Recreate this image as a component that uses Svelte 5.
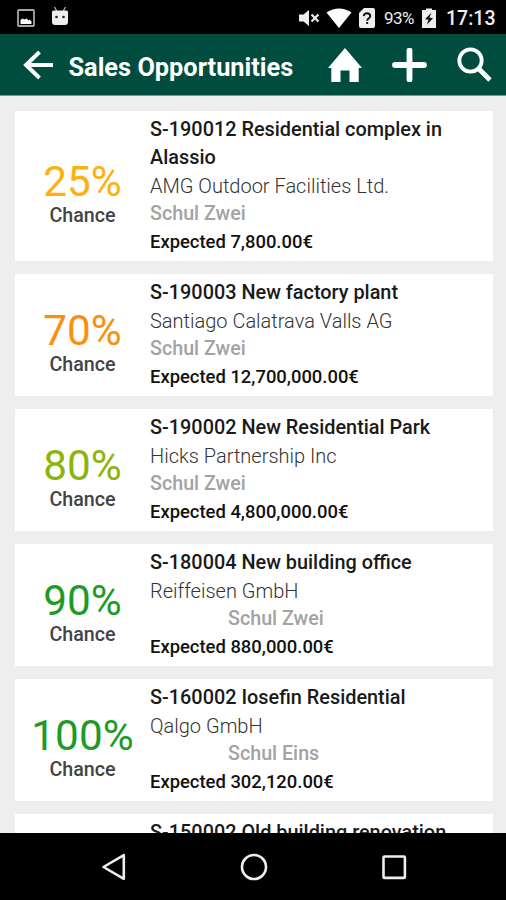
<script>
  const opportunities = [
    { chance: '25%', color: '#fdb10f', title: 'S-190012 Residential complex in Alassio', company: 'AMG Outdoor Facilities Ltd.', owner: 'Schul Zwei', expected: '7,800.00€' },
    { chance: '70%', color: '#fb900c', title: 'S-190003 New factory plant', company: 'Santiago Calatrava Valls AG', owner: 'Schul Zwei', expected: '12,700,000.00€' },
    { chance: '80%', color: '#8cb40c', title: 'S-190002 New Residential Park', company: 'Hicks Partnership Inc', owner: 'Schul Zwei', expected: '4,800,000.00€' },
    { chance: '90%', color: '#1e9a25', title: 'S-180004 New building office', company: 'Reiffeisen GmbH', owner: 'Schul Zwei', indented: true, expected: '880,000.00€' },
    { chance: '100%', color: '#1e9a25', title: 'S-160002 Iosefin Residential', company: 'Qalgo GmbH', owner: 'Schul Eins', indented: true, expected: '302,120.00€' },
    { title: 'S-150002 Old building renovation' }
  ];
</script>

<div class="screen">
  <div class="status">
    <svg class="picture" width="18" height="18" viewBox="0 0 18 18">
      <rect x="1" y="1" width="16" height="16" rx="1" fill="none" stroke="#a6a6a6" stroke-width="1.8" />
      <path d="M3.500 15V11l2-1.500 2 1 2-1 2 2 1-1 2 2v2.500z" fill="#fff" />
    </svg>
    <svg class="robot" width="18" height="20" viewBox="0 0 18 20">
      <path d="M3.500 1l2.300 4M14.500 1l-2.300 4" stroke="#bbb" stroke-width="1.200" />
      <path d="M1 6q0-1.500 1.500-1.500h13Q17 4.500 17 6v10q0 3-3 3H4q-3 0-3-3z" fill="#eee" />
      <circle cx="5.500" cy="11" r="1.300" fill="#222" /><circle cx="12.500" cy="11" r="1.300" fill="#222" />
    </svg>
    <span class="spacer"></span>
    <svg class="mute" width="21" height="18" viewBox="0 0 21 18">
      <path d="M0 5.500h4.500L10 1v16l-5.500-4.500H0z" fill="#eee" />
      <path d="M12.500 5.500l7 7M19.500 5.500l-7 7" stroke="#eee" stroke-width="2.200" />
    </svg>
    <svg class="wifi" width="26" height="20" viewBox="0 0 26 20">
      <path d="M0.500 4.500Q13-3.500 25.500 4.500L13 20z" fill="#fff" />
    </svg>
    <svg class="sim" width="16" height="20" viewBox="0 0 16 20">
      <path d="M5 0h9q2 0 2 2v16q0 2-2 2H2q-2 0-2-2V5z" fill="#eee" />
      <path d="M4.700 8.200Q5 5.200 8 5.200t3.300 2.800c0 2.300-3.100 2.300-3.100 4.800M8.200 14v2" fill="none" stroke="#111" stroke-width="1.900" />
    </svg>
    <span class="percent">93%</span>
    <svg class="battery" width="14" height="20" viewBox="0 0 14 20">
      <path d="M4 0.500h6V2h4v18H0V2h4z" fill="#eee" />
      <path d="M9.500 4.500L3 11.200l3.500.6-1.700 5L11 10.200l-3.600-.6z" fill="#111" />
    </svg>
    <span class="clock">17:13</span>
  </div>

  <header>
    <svg class="back" width="32" height="32" viewBox="0 0 32 32">
      <path d="M17.500 3L4 16l13.500 13M4.500 16H31" fill="none" stroke="#fff" stroke-width="3.900" />
    </svg>
    <h1>Sales Opportunities</h1>
    <span class="spacer"></span>
    <svg class="home" width="34" height="34" viewBox="0 0 34 34">
      <path d="M17 0l17 20h-3.300v14H21.500V22.500h-9V34H3.300V20H0z" fill="#fff" />
    </svg>
    <svg class="add" width="35" height="34" viewBox="0 0 35 34">
      <path d="M17.500 2.500v29M3 17h29" stroke="#fff" stroke-width="5.800" stroke-linecap="round" />
    </svg>
    <svg class="search" width="35" height="35" viewBox="0 0 35 35">
      <circle cx="13.500" cy="13.500" r="11.200" fill="none" stroke="#fff" stroke-width="3.800" />
      <path d="M21.500 21.500L33 33" stroke="#fff" stroke-width="4.800" />
    </svg>
  </header>

  <main>
    {#each opportunities as item}
      <article>
        <div class="chance">
          {#if item.chance}
            <strong style="color: {item.color}">{item.chance}</strong>
            <span>Chance</span>
          {/if}
        </div>
        <div class="details">
          <h2>{item.title}</h2>
          {#if item.company}
            <p class="company">{item.company}</p>
            <p class="owner" class:indented={item.indented}>{item.owner}</p>
            <p class="expected">Expected {item.expected}</p>
          {/if}
        </div>
      </article>
    {/each}
  </main>

  <nav>
    <svg width="26" height="28" viewBox="0 0 26 28">
      <path d="M22.800 2.200v23.600L2.500 14z" fill="none" stroke="#eee" stroke-width="2.600" stroke-linejoin="round" />
    </svg>
    <svg width="28" height="28" viewBox="0 0 28 28">
      <circle cx="14" cy="14" r="12" fill="none" stroke="#eee" stroke-width="2.600" />
    </svg>
    <svg width="26" height="26" viewBox="0 0 26 26">
      <rect x="2.500" y="2.500" width="21.400" height="21.400" rx="1" fill="none" stroke="#eee" stroke-width="2.600" />
    </svg>
  </nav>
</div>

<style>
  .screen {
    width: 506px;
    height: 900px;
    display: flex;
    flex-direction: column;
    overflow: hidden;
    background: #eee;
    font-family: Roboto, "Liberation Sans", sans-serif;
  }
  svg { display: block; flex: none; }
  .spacer { flex: 1; }
  .status {
    height: 34px;
    flex: none;
    box-sizing: border-box;
    display: flex;
    align-items: center;
    padding: 1px 11px 0 16.500px;
    background: #000;
    color: #eee;
    white-space: nowrap;
  }
  .robot { margin: -3px 0 0 16px; }
  .wifi { margin-left: 6px; }
  .sim { margin-left: 7px; }
  .percent { width: 32px; margin: 0 0 0 9px; font-size: 17px; letter-spacing: -0.500px; }
  .battery { margin-left: 6px; }
  .clock { width: 49px; margin: 2px 0 0 10px; font-size: 19.500px; font-weight: 500; }
  header {
    height: 62px;
    flex: none;
    box-sizing: border-box;
    display: flex;
    align-items: center;
    padding: 0 14px 0 22px;
    background: #004d3f;
    border-bottom: 1px solid #6a93cc;
  }
  h1 {
    margin: 5px 0 0 14.500px;
    color: #fff;
    font-size: 25.350px;
    line-height: 32px;
    font-weight: 700;
    white-space: nowrap;
  }
  .add { margin-left: 30px; }
  .search { margin-left: 30px; }
  main {
    flex: 1;
    min-height: 0;
    overflow: hidden;
    padding: 15.400px 13.500px 0 15px;
    display: flex;
    flex-direction: column;
    gap: 13.600px;
  }
  article {
    flex: none;
    min-height: 112px;
    display: flex;
    padding: 4.900px 0 4.500px;
    background: #fff;
  }
  .chance {
    width: 135px;
    flex: none;
    box-sizing: border-box;
    padding-top: 15px;
    display: flex;
    flex-direction: column;
    align-items: center;
    justify-content: center;
    color: #444;
  }
  strong { font-size: 42.300px; line-height: 44px; font-weight: 400; }
  .chance span { font-size: 19.700px; line-height: 24px; font-weight: 500; }
  .details { width: 315px; }
  h2, p { margin: 0; font-size: 19.700px; line-height: 28px; }
  h2 { color: #1a1a1a; font-size: 19.880px; font-weight: 500; }
  .company { color: #333; font-size: 20px; font-weight: 300; }
  .owner { color: #a3a3a3; font-weight: 500; }
  .indented { padding-left: 78px; }
  .expected { color: #111; font-size: 18.420px; font-weight: 500; }
  nav {
    height: 67px;
    flex: none;
    display: flex;
    align-items: center;
    justify-content: space-between;
    box-sizing: border-box;
    padding: 0 99px 0 101px;
    background: #000;
  }
</style>
